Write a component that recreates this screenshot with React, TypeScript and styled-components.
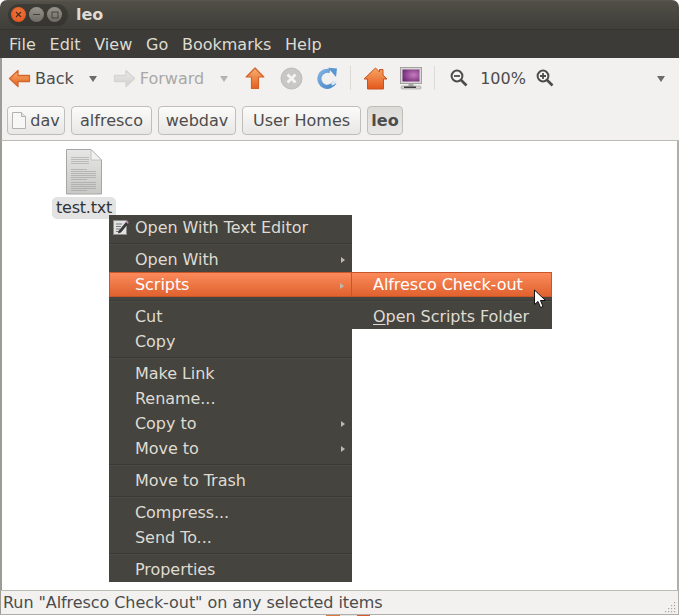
import React from "react";
import styled, { createGlobalStyle } from "styled-components";

const Global = createGlobalStyle`
  html, body { margin: 0; padding: 0; background: #fff; }
  body { width: 680px; height: 616px; overflow: hidden; font-family: "DejaVu Sans", sans-serif; font-size: 16px; }
`;

const Win = styled.div`
  width: 679px; height: 615px; box-sizing: border-box;
  display: flex; flex-direction: column; position: relative;
  border-radius: 7px 7px 0 0; overflow: hidden;
  background: #f2f1f0;
  border-bottom: 1px solid #b0aea8;
`;
const TitleBar = styled.div`
  height: 30px; flex: none; display: flex; align-items: center;
  padding-left: 8px; box-sizing: border-box;
  background: linear-gradient(#5a5851 0, #504e47 2px, #3f3e39 100%);
  border-bottom: 1px solid #35342f;
`;
const Lights = styled.div`
  display: flex; align-items: center; gap: 3px; height: 22px; padding: 0 3px;
  border-radius: 11px; background: rgba(40, 39, 35, .45); width: 60px; box-sizing: border-box;
`;
const Light = styled.div<{ $c: string }>`
  width: 15px; height: 15px; border-radius: 50%; background: ${p => p.$c};
  display: flex; align-items: center; justify-content: center; flex: none;
`;
const Title = styled.div`
  margin-left: 8px; font-weight: bold; color: #dfdbd2; font-size: 16px;
`;
const MenuBar = styled.div`
  height: 28px; flex: none; display: flex; align-items: center; gap: 13.75px;
  padding-left: 9px; background: #3c3b37; color: #dfdbd2;
`;
const Toolbar = styled.div`
  height: 40px; flex: none; display: flex; align-items: center;
  box-sizing: border-box; background: #f2f1f0; color: #4c4c4c;
  border-left: 2px solid #9d9b95; padding-left: 6px;
`;
const Spot = styled.div<{ $l?: number }>`
  display: flex; align-items: center; flex: none; margin-left: ${p => p.$l ?? 0}px;
`;
const TbLabel = styled.span<{ $dim?: boolean }>`
  margin-left: 4px; color: ${p => (p.$dim ? "#a9a8a5" : "#4c4c4c")};
`;
const Arrow = styled.div<{ $l: number; $dim?: boolean }>`
  margin-left: ${p => p.$l}px; flex: none; width: 0; height: 0; margin-top: 2px;
  border-left: 4px solid transparent; border-right: 4px solid transparent;
  border-top: 6px solid ${p => (p.$dim ? "#b4b3b0" : "#6b6b6b")};
`;
const VSep = styled.div<{ $l: number }>`
  width: 1px; height: 24px; background: #dcdad6; flex: none; margin-left: ${p => p.$l}px;
`;
const PathBar = styled.div`
  height: 43px; flex: none; display: flex; align-items: flex-start; gap: 6px;
  padding: 8px 0 0 5px; box-sizing: border-box; border-left: 2px solid #9d9b95;
  border-bottom: 1px solid #bcbab4;
`;
const Crumb = styled.div<{ $w: number; $on?: boolean }>`
  width: ${p => p.$w}px; height: 29px; box-sizing: border-box; display: flex;
  align-items: center; justify-content: center; gap: 4px;
  border: 1px solid #c0beb8; border-radius: 4px; color: #4c4c4c;
  font-weight: ${p => (p.$on ? "bold" : "normal")};
  background: ${p => (p.$on ? "linear-gradient(#dddbd8, #e8e7e5)" : "linear-gradient(#fbfbfa, #e8e7e5)")};
`;
const Content = styled.div`
  flex: 1; background: #fff; position: relative;
  border-left: 2px solid #9d9b95; border-right: 2px solid #b0aea8;
`;
const FileItem = styled.div`
  position: absolute; left: 50px; top: 8px; width: 64px;
  display: flex; flex-direction: column; align-items: center;
`;
const FileName = styled.div`
  margin-top: 2px; width: 64px; height: 22px; border-radius: 5px; background: #e3e3e3;
  color: #2e3436; text-align: center; line-height: 21px; white-space: nowrap; letter-spacing: -0.25px;
`;
const Menu = styled.div<{ $l: number; $t: number; $w: number }>`
  position: absolute; left: ${p => p.$l}px; top: ${p => p.$t}px; width: ${p => p.$w}px;
  background: #45443f; color: #dfdbd2; display: flex; flex-direction: column;
`;
const Item = styled.div<{ $on?: boolean }>`
  height: 25px; display: flex; align-items: center; position: relative; box-sizing: border-box;
  padding-left: 26px; white-space: nowrap; letter-spacing: -0.05px;
  color: ${p => (p.$on ? "#fff" : "#dfdbd2")};
  ${p => p.$on ? `background: linear-gradient(#fb8a5b, #e0622f); border: 1px solid #c9562a; padding-left: 25px;` : ""}
`;
const SubItem = styled(Item)`
  padding-left: 22px;
  ${p => (p.$on ? "padding-left: 21px;" : "")}
`;
const Sep = styled.div`
  height: 7px; flex: none; position: relative;
  &::before { content: ""; position: absolute; left: 0; right: 0; top: 3px; height: 1px; background: #3a3935; }
  &::after { content: ""; position: absolute; left: 0; right: 0; top: 4px; height: 1px; background: #4c4b46; }
`;
const Chevron = styled.span`
  position: absolute; right: 7px; top: 10px; width: 0; height: 0;
  border-top: 3px solid transparent; border-bottom: 3px solid transparent;
  border-left: 4px solid #bdb9b0;
`;
const ItemIcon = styled.span`
  position: absolute; left: 4px; top: 4px; display: flex;
`;
const Status = styled.div`
  height: 24px; flex: none; display: flex; align-items: center; padding-left: 2px; position: relative;
  box-sizing: border-box; border-top: 1px solid #bcbab4; border-left: 1px solid #9d9b95; border-right: 1px solid #b0aea8;
  color: #4c4c4c; background: #f2f1f0; white-space: nowrap; letter-spacing: -0.07px;
`;
const Grip = styled.svg`
  position: absolute; right: 1px; bottom: 0;
`;
const Cursor = styled.svg`
  position: absolute; left: 531px; top: 148px;
`;
const U = styled.span`text-decoration: underline; text-underline-offset: 2px;`;
const Below = styled.div`
  height: 1px; display: flex; padding-left: 326px;
`;
const Sliver = styled.div<{ $c: string; $w: number }>`
  width: ${p => p.$w}px; height: 1px; background: ${p => p.$c};
`;

const Defs = () => (
  <svg width="0" height="0" style={{ position: "absolute" }}>
    <defs>
      <linearGradient id="or" x1="0" y1="0" x2="0" y2="1"><stop offset="0" stopColor="#f9b070" /><stop offset="1" stopColor="#e2601f" /></linearGradient>
      <linearGradient id="gr" x1="0" y1="0" x2="0" y2="1"><stop offset="0" stopColor="#eceae8" /><stop offset="1" stopColor="#d2d0ce" /></linearGradient>
      <linearGradient id="home" x1="0" y1="0" x2="0" y2="1"><stop offset="0" stopColor="#f7a764" /><stop offset="1" stopColor="#e4571c" /></linearGradient>
      <linearGradient id="bl" x1="0" y1="0" x2="1" y2="1"><stop offset="0" stopColor="#7fb1e0" /><stop offset="1" stopColor="#4a87c8" /></linearGradient>
      <radialGradient id="scr" cx=".65" cy=".45" r=".7"><stop offset="0" stopColor="#c87cc0" /><stop offset="1" stopColor="#6d2a75" /></radialGradient>
      <linearGradient id="pg" x1="0" y1="0" x2="0" y2="1"><stop offset="0" stopColor="#e6e6e4" /><stop offset="1" stopColor="#c8c8c6" /></linearGradient>
    </defs>
  </svg>
);

const HArrow = ({ dim, flip }: { dim?: boolean; flip?: boolean }) => (
  <svg width="23" height="19" viewBox="0 0 23 19" style={{ transform: flip ? "scaleX(-1)" : undefined }}>
    <path d="M10 1.5 1.5 9.500l8.500 8v-5h11.500v-6H10z" fill={dim ? "url(#gr)" : "url(#or)"} stroke={dim ? "#d6d4d2" : "#d4682c"} strokeLinejoin="round" strokeWidth="1.3" />
  </svg>
);
const Up = () => (
  <svg width="20" height="23" viewBox="0 0 20 23">
    <path d="M10 1 1.200 10H6.500v11.500h7V10h5.300z" fill="url(#or)" stroke="#d4602a" strokeLinejoin="round" strokeWidth="1.2" />
  </svg>
);
const Stop = () => (
  <svg width="23" height="23" viewBox="0 0 23 23">
    <circle cx="11.500" cy="11.500" r="10.500" fill="#c9c7c5" stroke="#bdbbb9" />
    <path d="M7.500 7.500l8 8M15.500 7.500l-8 8" stroke="#f6f5f4" strokeWidth="2.6" />
  </svg>
);
const Reload = () => (
  <svg width="21" height="22" viewBox="0 0 21 22">
    <path d="M17.500 15.500A8 8 0 1 1 13 4.200" fill="none" stroke="url(#bl)" strokeWidth="4.2" />
    <path d="M11 0.800 20 1.500 19 10z" fill="#5a96d2" />
    <path d="M14.500 17a6 6 0 0 0 4-3" fill="none" stroke="#dce9f5" strokeWidth="3.5" />
  </svg>
);
const Home = () => (
  <svg width="25" height="23" viewBox="0 0 25 23">
    <path d="M12.500 1 1 12h3.500v10h16V12H24l-4-4V2.500h-3.500V5z" fill="url(#home)" stroke="#c9531f" strokeLinejoin="round" />
  </svg>
);
const Computer = () => (
  <svg width="23" height="23" viewBox="0 0 23 23">
    <rect x=".5" y=".5" width="21" height="16" fill="#d8d7d5" stroke="#a3a2a0" />
    <rect x="2.500" y="2.500" width="17" height="12" fill="url(#scr)" />
    <rect x="8.500" y="17" width="5" height="2" fill="#a8a7a5" />
    <rect x="1" y="19" width="20" height="3" rx="1" fill="#d4d3d1" stroke="#8e8d8b" strokeWidth=".5" />
    <rect x="4" y="19.500" width="12" height="1.500" fill="#3c3c3c" />
  </svg>
);
const Zoom = ({ plus }: { plus?: boolean }) => (
  <svg width="18" height="18" viewBox="0 0 18 18">
    <circle cx="7" cy="7" r="5.400" fill="#f6f5f4" stroke="#4c4c4c" strokeWidth="2" />
    <path d="M11 11l5.500 5.500" stroke="#4c4c4c" strokeWidth="2.600" />
    <path d={plus ? "M4 7h6M7 4v6" : "M4 7h6"} stroke="#4c4c4c" strokeWidth="1.800" />
  </svg>
);
const SmallPage = () => (
  <svg width="14" height="17" viewBox="0 0 14 17">
    <path d="M.5.500h9l4 4v12H.5z" fill="#f7f7f6" stroke="#b3b2af" />
    <path d="M9.500.500v4h4" fill="#e4e3e1" stroke="#b3b2af" />
  </svg>
);
const DocIcon = () => {
  const rows = [8, 10, 12, 14, 20, 22, 24, 26, 28, 30, 33, 35, 37, 39, 41];
  return (
    <svg width="36" height="46" viewBox="0 0 36 46">
      <path d="M.5.500H25L35.500 11v34H.5z" fill="url(#pg)" stroke="#a6a6a4" />
      <path d="M25 .500V11h10.500z" fill="#f1f1ef" stroke="#b5b5b3" strokeWidth=".7" />
      {rows.map((y, i) => (
        <rect key={i} x="5" y={y} width={i % 5 === 4 ? 16 : y < 15 ? 18 : 25} height="1" fill="#8d8d8b" opacity=".45" />
      ))}
    </svg>
  );
};
const EditIcon = () => (
  <svg width="16" height="16" viewBox="0 0 16 16">
    <rect x=".5" y="1.500" width="13" height="14" fill="#e2e2e0" stroke="#8e8e8c" />
    <path d="M3 5h6M3 7.500h5M3 10h4M3 12.500h5" stroke="#77777a" />
    <path d="M5.500 12 13 3l2 2-7 8.500-3 1z" fill="#39393a" />
    <path d="M13 3l1-1.500 1.600 1.700L15 5z" fill="#d08ac5" />
  </svg>
);

export default function App() {
  return (
    <>
      <Global />
      <Defs />
      <Win>
        <TitleBar>
          <Lights>
            <Light $c="radial-gradient(circle at 50% 40%, #f27a42, #de4c15)">
              <svg width="7" height="7" viewBox="0 0 7 7"><path d="M1 1l5 5M6 1 1 6" stroke="#4a2a1c" strokeWidth="1.200" /></svg>
            </Light>
            <Light $c="linear-gradient(#96948c, #6d6b64)">
              <svg width="9" height="3" viewBox="0 0 9 3"><path d="M1 1.500h7" stroke="#43423d" strokeWidth="1.200" /></svg>
            </Light>
            <Light $c="linear-gradient(#96948c, #6d6b64)">
              <svg width="8" height="8" viewBox="0 0 8 8"><rect x="1" y="1" width="6" height="6" fill="none" stroke="#43423d" /></svg>
            </Light>
          </Lights>
          <Title>leo</Title>
        </TitleBar>
        <MenuBar>
          <span>File</span><span>Edit</span><span>View</span><span>Go</span><span>Bookmarks</span><span>Help</span>
        </MenuBar>
        <Toolbar>
          <HArrow />
          <TbLabel>Back</TbLabel>
          <Arrow $l={15} />
          <Spot $l={16}><HArrow dim flip /></Spot>
          <TbLabel $dim>Forward</TbLabel>
          <Arrow $l={16} $dim />
          <Spot $l={17}><Up /></Spot>
          <Spot $l={15}><Stop /></Spot>
          <Spot $l={14}><Reload /></Spot>
          <VSep $l={12} />
          <Spot $l={12}><Home /></Spot>
          <Spot $l={12}><Computer /></Spot>
          <VSep $l={11} />
          <Spot $l={15}><Zoom /></Spot>
          <Spot $l={12}><span>100%</span></Spot>
          <Spot $l={10}><Zoom plus /></Spot>
          <Arrow $l={103} />
        </Toolbar>
        <PathBar>
          <Crumb $w={58}><SmallPage />dav</Crumb>
          <Crumb $w={81}>alfresco</Crumb>
          <Crumb $w={78}>webdav</Crumb>
          <Crumb $w={119}>User Homes</Crumb>
          <Crumb $w={36} $on>leo</Crumb>
        </PathBar>
        <Content>
          <FileItem>
            <DocIcon />
            <FileName>test.txt</FileName>
          </FileItem>
          <Menu $l={107} $t={74} $w={243}>
            <Item><ItemIcon><EditIcon /></ItemIcon>Open With Text Editor</Item>
            <Sep />
            <Item>Open With<Chevron /></Item>
            <Item $on>Scripts<Chevron /></Item>
            <Sep />
            <Item>Cut</Item>
            <Item>Copy</Item>
            <Sep />
            <Item>Make Link</Item>
            <Item>Rename...</Item>
            <Item>Copy to<Chevron /></Item>
            <Item>Move to<Chevron /></Item>
            <Sep />
            <Item>Move to Trash</Item>
            <Sep />
            <Item>Compress...</Item>
            <Item>Send To...</Item>
            <Sep />
            <Item>Properties</Item>
          </Menu>
          <Menu $l={349} $t={131} $w={201}>
            <SubItem $on>Alfresco Check-out</SubItem>
            <Sep />
            <SubItem><span><U>O</U>pen Scripts Folder</span></SubItem>
          </Menu>
          <Cursor width="14" height="20" viewBox="0 0 14 20">
            <path d="M1.500 1v14.500l3.500-3 2.500 6 2.500-1-2.500-6h5z" fill="#fff" stroke="#111" strokeWidth="1" strokeLinejoin="round" />
          </Cursor>
        </Content>
        <Status>
          Run "Alfresco Check-out" on any selected items
          <Grip width="12" height="12" viewBox="0 0 12 12" fill="#a9a7a2">
            <rect x="9" y="0" width="1.200" height="1.200" /><rect x="6" y="3" width="1.200" height="1.200" /><rect x="9" y="3" width="1.200" height="1.200" />
            <rect x="3" y="6" width="1.200" height="1.200" /><rect x="6" y="6" width="1.200" height="1.200" /><rect x="9" y="6" width="1.200" height="1.200" />
            <rect x="0" y="9" width="1.200" height="1.200" /><rect x="3" y="9" width="1.200" height="1.200" /><rect x="6" y="9" width="1.200" height="1.200" /><rect x="9" y="9" width="1.200" height="1.200" />
          </Grip>
        </Status>
      </Win>
      <Below>
        <Sliver $c="#e0773c" $w={14} />
        <Sliver $c="#e6e5e3" $w={17} />
        <Sliver $c="#dc5a2a" $w={13} />
      </Below>
    </>
  );
}
